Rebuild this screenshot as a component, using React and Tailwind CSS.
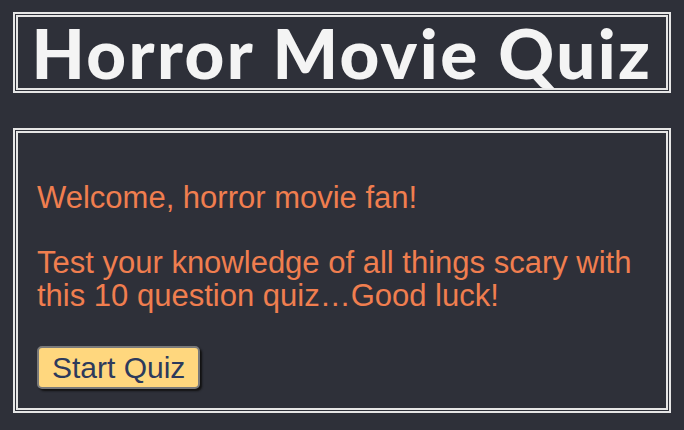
import React from 'react';

export default function App() {
  return (
    <div className="min-h-[430px] bg-[#2e3039] px-[13px] pt-[12px] pb-[17px]" style={{ fontFamily: '"Liberation Sans", Arial, sans-serif' }}>
      <header className="h-[81px] border-[5px] border-double border-[#e6e6e6] flex items-center justify-center">
        <h1 className="text-[#f4f4f4] text-[69px] leading-none font-black tracking-[2.4px]" style={{ fontFamily: 'Lato, "Open Sans", sans-serif' }}>
          Horror Movie Quiz
        </h1>
      </header>

      <main className="mt-[35px] h-[285px] border-[5px] border-double border-[#e6e6e6] px-[19px] pt-[48px]">
        <p className="text-[#f07e4f] text-[31px] leading-[34px]">Welcome, horror movie fan!</p>
        <p className="mt-[31px] text-[#f07e4f] text-[31px] leading-[33px]">
          Test your knowledge of all things scary with this 10 question quiz…Good luck!
        </p>
        <button className="mt-[34px] h-[43px] px-[13px] rounded-[5px] border-2 border-[#7a7a7a] bg-[#ffd77e] text-[30px] leading-none text-[#2d3a5c] shadow-[2px_2px_2px_#111]">
          Start Quiz
        </button>
      </main>
    </div>
  );
}
